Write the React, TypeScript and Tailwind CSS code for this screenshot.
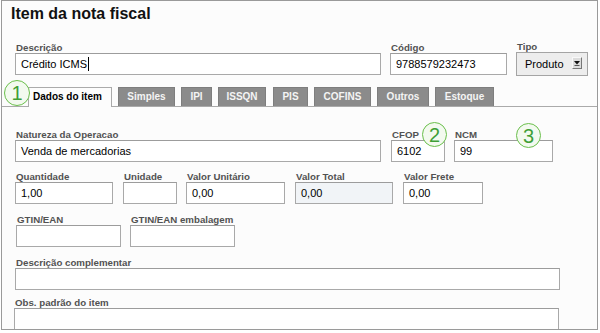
import type { ReactNode } from "react"

type Field = {
  label: string
  w: string
  value?: string
  className?: string
  inputClass?: string
}

const tabs = [
  { name: "Simples", cls: "ml-[6px] w-[57px]" },
  { name: "IPI", cls: "ml-[6px] w-[31px]" },
  { name: "ISSQN", cls: "ml-[6px] w-[48px]" },
  { name: "PIS", cls: "ml-[7px] w-[35px]" },
  { name: "COFINS", cls: "ml-[6px] w-[57px]" },
  { name: "Outros", cls: "ml-[6px] w-[52px]" },
  { name: "Estoque", cls: "ml-[6px] w-[59px]" },
]

function Label({ children }: { children: ReactNode }) {
  return (
    <div className="h-[11px] pl-px text-[9.7px] leading-[11px] font-bold text-[#525252] whitespace-nowrap">
      {children}
    </div>
  )
}

function TextField({ label, w, value, className, inputClass }: Field) {
  return (
    <div className={`flex flex-col ${w} ${className ?? ""}`}>
      <Label>{label}</Label>
      <div
        className={`h-[22px] border border-[#a9a9a9] border-t-[#9c9c9c] pl-[5px] text-[11px] leading-[20px] text-black whitespace-nowrap ${
          inputClass ?? "bg-white"
        }`}
      >
        {value}
      </div>
    </div>
  )
}

function Marker({ n, cls }: { n: string; cls: string }) {
  return (
    <div
      className={`absolute z-10 flex items-center justify-center rounded-full border-[1.5px] border-[#6abf4b] bg-[#f3faef] text-[20px] leading-none text-[#3f9f36] ${cls}`}
    >
      {n}
    </div>
  )
}

export default function App() {
  return (
    <div className="w-[600px] h-[333px] overflow-hidden bg-white font-['Liberation_Sans',Arial,sans-serif]">
      <div className="relative ml-px w-[597px] h-[330px] overflow-hidden border border-[#9a9a9a] bg-[#fcfcfc]">
        <h1 className="pt-[3px] pl-[9px] text-[16px] leading-[19px] font-bold text-[#111]">
          Item da nota fiscal
        </h1>

        <div className="mt-[19px] flex items-start pl-[13px]">
          <div className="flex w-[366px] flex-col">
            <Label>Descrição</Label>
            <div className="flex h-[22px] items-center border border-[#a9a9a9] border-t-[#9c9c9c] bg-white pl-[5px] text-[11px] leading-[20px] text-black">
              Crédito ICMS
              <span className="ml-px h-[14px] w-px bg-black" />
            </div>
          </div>
          <TextField label="Código" w="w-[117px]" value="9788579232473" className="ml-[9px]" />
          <div className="ml-[9px] flex w-[72px] flex-col">
            <div className="h-[10px] pl-px text-[9.7px] leading-[10px] font-bold text-[#525252]">Tipo</div>
            <div className="relative h-[24px] border border-[#a4a4a4] bg-[#ededed] pl-[8px] text-[11px] leading-[22px] text-black">
              Produto
              <div className="absolute right-[5px] top-[4px] flex h-[12px] w-[10px] items-center justify-center border border-t-[#f8f8f8] border-l-[#f8f8f8] border-r-[#777] border-b-[#777] bg-[#dcdcdc]">
                <svg width="6" height="5" viewBox="0 0 6 5">
                  <path d="M0 0h6L3 3.5z" fill="#111" />
                  <path d="M0.5 4.5h5" stroke="#555" strokeWidth="1" />
                </svg>
              </div>
            </div>
          </div>
        </div>

        <div className="mt-[10px] flex h-[21px] items-end border-b border-[#aaa]">
          <div className="relative z-[1] -mb-px ml-[26px] h-[20px] w-[84px] border border-b-0 border-[#aaa] bg-[#fcfcfc] pl-[4px] text-[10px] leading-[17px] font-bold text-black">
            Dados do item
          </div>
          {tabs.map((t) => (
            <div
              key={t.name}
              className={`h-[19px] border border-b-0 border-[#7e7e7e] bg-[#8b8b8b] text-center text-[10px] leading-[18px] font-bold text-[#f4f4f4] ${t.cls}`}
            >
              {t.name}
            </div>
          ))}
        </div>

        <div className="mt-[22px] flex items-start pl-[13px]">
          <TextField label="Natureza da Operacao" w="w-[366px]" value="Venda de mercadorias" />
          <TextField label="CFOP" w="w-[54px]" value="6102" className="ml-[10px]" />
          <TextField label="NCM" w="w-[99px]" value="99" className="ml-[9px]" />
        </div>

        <div className="mt-[9px] flex items-start pl-[13px]">
          <TextField label="Quantidade" w="w-[98px]" value="1,00" />
          <TextField label="Unidade" w="w-[54px]" className="ml-[10px]" />
          <TextField label="Valor Unitário" w="w-[99px]" value="0,00" className="ml-[9px]" />
          <TextField
            label="Valor Total"
            w="w-[98px]"
            value="0,00"
            className="ml-[10px]"
            inputClass="bg-[#f1f4f7]"
          />
          <TextField label="Valor Frete" w="w-[80px]" value="0,00" className="ml-[10px]" />
        </div>

        <div className="mt-[10px] flex items-start pl-[14px]">
          <TextField label="GTIN/EAN" w="w-[105px]" />
          <TextField label="GTIN/EAN embalagem" w="w-[105px]" className="ml-[9px]" />
        </div>

        <div className="mt-[10px] pl-[13px]">
          <TextField label="Descrição complementar" w="w-[545px]" />
        </div>

        <div className="mt-[7px] pl-[12px]">
          <TextField label="Obs. padrão do item" w="w-[545px]" />
        </div>

        <Marker n="1" cls="left-[2px] top-[79px] h-[26px] w-[26px]" />
        <Marker n="2" cls="left-[420px] top-[121px] h-[25px] w-[25px]" />
        <Marker n="3" cls="left-[514px] top-[122px] h-[25px] w-[25px]" />
      </div>
    </div>
  )
}
